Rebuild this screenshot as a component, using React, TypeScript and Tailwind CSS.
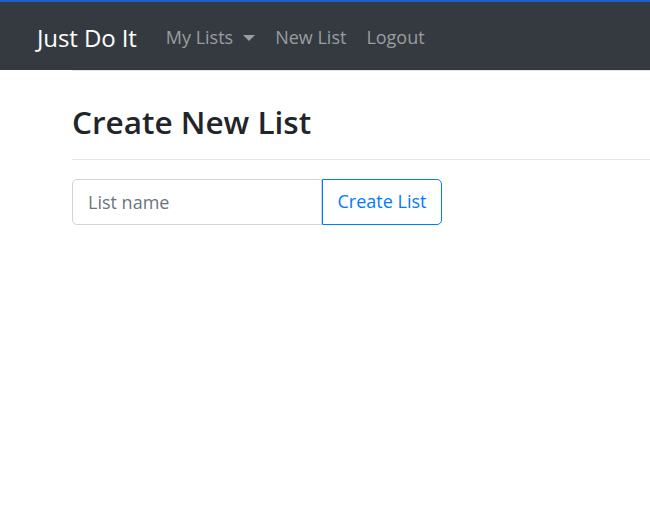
import React from "react";

export default function App() {
  return (
    <div className="min-h-[521px] bg-white" style={{ fontFamily: '"Open Sans", "Noto Sans", sans-serif' }}>
      <nav className="h-[70px] border-t-2 border-[#1a5fd8] bg-[#343a40] flex items-center pl-[37px] pt-[3px]">
        <span className="text-[24px] text-white mr-[29px] tracking-[-0.1px]">Just Do It</span>
        <div className="flex items-center gap-[20px] text-[18px] text-[#9a9da0]">
          <span className="flex items-center">
            My Lists
            <svg width="12" height="7" viewBox="0 0 12 7" className="ml-[10px] mt-[1px]">
              <path d="M0 0 L12 0 L6 6 Z" fill="#9a9da0" />
            </svg>
          </span>
          <span>New List</span>
          <span>Logout</span>
        </div>
      </nav>
      <div className="pl-[72px]">
        <div className="h-px bg-[#e3e3e3]" />
        <h1 className="mt-[32px] text-[31.5px] font-semibold text-[#212529] leading-[1.2]">Create New List</h1>
        <div className="mt-[18px] h-px bg-[#e3e5e7]" />
        <div className="mt-[19px] flex">
          <input
            placeholder="List name"
            className="w-[250px] h-[46px] border border-[#ced4da] rounded-l-[5px] px-[15px] text-[18px] text-[#495057] placeholder:text-[#6c757d] outline-none"
          />
          <button className="w-[120px] h-[46px] border border-[#007bff] rounded-r-[5px] text-[18px] text-[#007bff] bg-white">
            Create List
          </button>
        </div>
      </div>
    </div>
  );
}
